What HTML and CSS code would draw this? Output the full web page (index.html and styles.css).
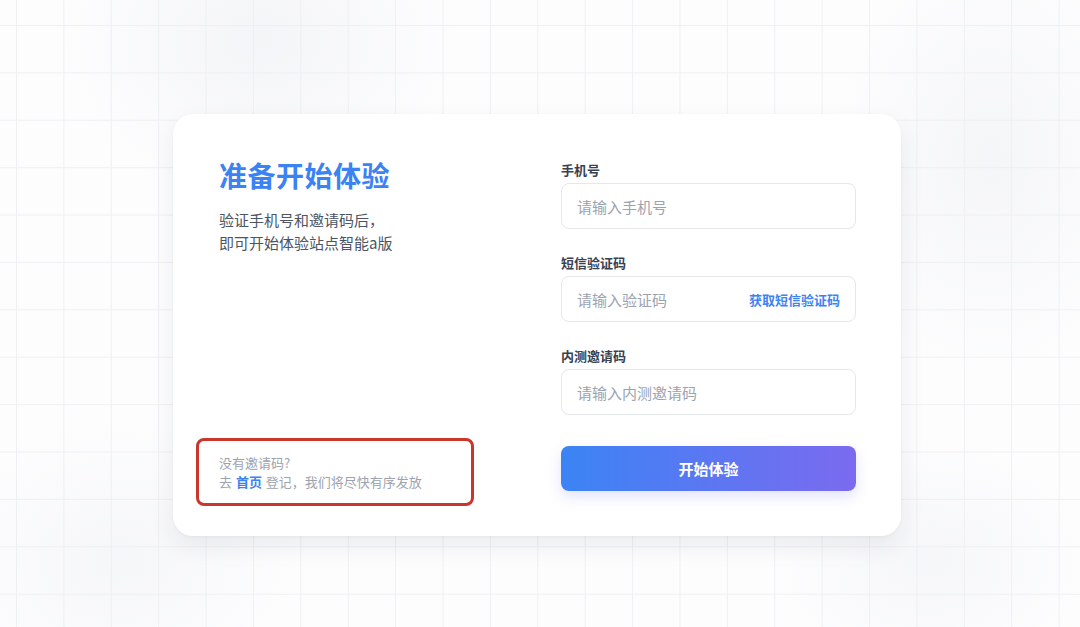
FILE: index.html
```html
<!DOCTYPE html>
<html lang="zh-CN">
<head>
<meta charset="utf-8">
<title>准备开始体验</title>
<link rel="stylesheet" href="styles.css">
</head>
<body>
<div class="page">
  <div class="card">
    <div class="intro">
      <h1 class="title">准备开始体验</h1>
      <p class="subtitle">验证手机号和邀请码后，<br>即可开始体验站点智能a版</p>
      <div class="hint">
        <div>没有邀请码?</div>
        <div>去 <a class="hint-link" href="#">首页</a> 登记，我们将尽快有序发放</div>
      </div>
    </div>
    <form class="form">
      <label class="label">手机号</label>
      <div class="field"><input class="input" type="text" placeholder="请输入手机号"></div>
      <label class="label">短信验证码</label>
      <div class="field"><input class="input" type="text" placeholder="请输入验证码"><span class="sms">获取短信验证码</span></div>
      <label class="label">内测邀请码</label>
      <div class="field"><input class="input" type="text" placeholder="请输入内测邀请码"></div>
      <button class="submit" type="button">开始体验</button>
    </form>
  </div>
</div>
</body>
</html>
```
FILE: styles.css
```css
* { box-sizing: border-box; }
html, body { margin: 0; padding: 0; }
body {
  width: 1080px;
  height: 627px;
  overflow: hidden;
  font-family: "Noto Sans CJK SC", "Noto Sans", sans-serif;
  background-color: #fdfdfe;
  background-image:
    radial-gradient(ellipse 200px 160px at 260px 40px, rgba(236,238,242,0.55), rgba(236,238,242,0) 100%),
    radial-gradient(ellipse 160px 220px at 990px 160px, rgba(236,238,242,0.5), rgba(236,238,242,0) 100%),
    radial-gradient(ellipse 180px 140px at 120px 560px, rgba(236,238,242,0.45), rgba(236,238,242,0) 100%),
    radial-gradient(ellipse 160px 120px at 930px 560px, rgba(236,238,242,0.45), rgba(236,238,242,0) 100%),
    linear-gradient(to right, #eff0f3 1px, transparent 1px),
    linear-gradient(to bottom, #eff0f3 1px, transparent 1px);
  background-size: auto, auto, auto, auto, 47.4px 47.4px, 47.4px 47.4px;
  background-position: 0 0, 0 0, 0 0, 0 0, 16px 0, 0 25px;
  background-repeat: no-repeat, no-repeat, no-repeat, no-repeat, repeat, repeat;
}
.page {
  padding: 114px 0 0 173px;
}
.card {
  width: 728px;
  height: 422px;
  background: #ffffff;
  border-radius: 20px;
  box-shadow: 0 10px 24px rgba(30, 41, 59, 0.08), 0 1px 3px rgba(30, 41, 59, 0.04);
  padding: 46px 45px 45px 46px;
  display: flex;
}
.intro {
  width: 342px;
  display: flex;
  flex-direction: column;
}
.title {
  margin: -2px 0 0;
  font-size: 28px;
  line-height: 34px;
  font-weight: 700;
  color: #3b83f3;
  letter-spacing: 0.5px;
}
.subtitle {
  margin: 16px 0 0;
  font-size: 15px;
  line-height: 23px;
  color: #4b5563;
}
.hint {
  margin: auto 0 -15px -23px;
  width: 278px;
  height: 68px;
  border: 3px solid #c9372c;
  border-radius: 8px;
  padding: 12px 0 0 20px;
  font-size: 13px;
  line-height: 19px;
  color: #9ca3af;
  word-spacing: 1px;
}
.hint-link {
  color: #3b83f3;
  font-weight: 700;
  text-decoration: none;
}
.form {
  width: 295px;
  margin: 0;
  display: flex;
  flex-direction: column;
}
.label {
  font-size: 13px;
  line-height: 19px;
  font-weight: 700;
  color: #374151;
  margin-bottom: 4px;
}
.field {
  height: 46px;
  border: 1px solid #e5e7eb;
  border-radius: 8px;
  display: flex;
  align-items: center;
  padding: 0 15px 0 15px;
  margin-bottom: 24px;
  background: #fff;
}
.input {
  flex: 1;
  min-width: 0;
  border: 0;
  outline: none;
  background: transparent;
  padding: 0;
  font-family: inherit;
  font-size: 15px;
  color: #111827;
}
.input::placeholder { color: #9ca3af; }
.sms {
  font-size: 13px;
  font-weight: 700;
  color: #3b83f3;
  white-space: nowrap;
}
.submit {
  margin-top: 7px;
  height: 45px;
  border: 0;
  border-radius: 8px;
  background: linear-gradient(to right, #3b84f4, #7b6aef);
  color: #ffffff;
  font-family: inherit;
  font-size: 15px;
  font-weight: 700;
  box-shadow: 0 6px 14px rgba(99, 102, 241, 0.18);
}
```
